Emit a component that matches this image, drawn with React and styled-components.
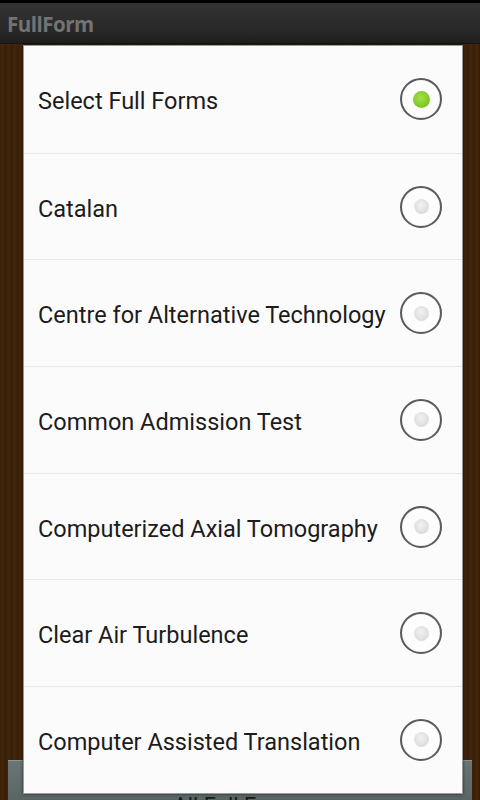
import React, { useState } from "react";
import styled, { createGlobalStyle } from "styled-components";

const GlobalStyle = createGlobalStyle`
  html, body {
    margin: 0;
    padding: 0;
    background: #000;
  }
  * {
    box-sizing: border-box;
  }
`;

const Screen = styled.div`
  position: relative;
  width: 480px;
  height: 800px;
  overflow: hidden;
  display: flex;
  flex-direction: column;
  font-family: Roboto, "Open Sans", sans-serif;
  background: #000;
  padding-top: 3px;
`;

const TitleBar = styled.div`
  height: 41px;
  display: flex;
  align-items: center;
  padding-left: 7px;
  padding-top: 2px;
  background: linear-gradient(#333333, #282828 70%, #1e1e1e);
  border-bottom: 1px solid #151515;
`;

const Title = styled.h1`
  margin: 0;
  font-family: "Open Sans", sans-serif;
  font-size: 20.5px;
  font-weight: bold;
  color: #737373;
  letter-spacing: -0.5px;
`;

const Content = styled.div`
  flex: 1;
  display: flex;
  flex-direction: column;
  justify-content: flex-end;
  padding: 0 8px;
  background: repeating-linear-gradient(
      90deg,
      #3a2108 0px,
      #43270c 3px,
      #341d06 6px
    );
`;

const SearchButton = styled.div`
  height: 64px;
  margin-bottom: -24px;
  background: linear-gradient(#6a7676, #4f5a5a);
  border-top: 1px solid #8a9494;
  display: flex;
  justify-content: center;
  padding-top: 32px;
  font-size: 22px;
  color: #1a1a1a;
`;

const Dialog = styled.div`
  position: absolute;
  left: 23px;
  top: 45px;
  width: 440px;
  height: 749px;
  background: #fbfbfb;
  border: 1px solid #9a9a9a;
  box-shadow: 0 0 3px rgba(0, 0, 0, 0.6);
  display: flex;
  flex-direction: column;
  overflow: hidden;
`;

const Row = styled.label`
  flex: 0 0 106.7px;
  display: flex;
  align-items: center;
  justify-content: space-between;
  padding: 4px 20px 0 14px;
  border-top: ${(p) => (p.$first ? "none" : "1px solid #e8e8e8")};
  cursor: pointer;
`;

const RowText = styled.span`
  font-size: 23.5px;
  color: #1c1c1c;
  white-space: nowrap;
`;

const Radio = styled.span`
  flex: 0 0 auto;
  width: 42px;
  height: 42px;
  margin-top: -4px;
  border-radius: 50%;
  border: 2px solid #5a5a5a;
  background: #fdfdfd;
  display: flex;
  align-items: center;
  justify-content: center;
  box-shadow: inset 0 0 1px rgba(0, 0, 0, 0.2);
`;

const Dot = styled.span`
  width: ${(p) => (p.$on ? "17px" : "15px")};
  height: ${(p) => (p.$on ? "17px" : "15px")};
  border-radius: 50%;
  background: ${(p) =>
    p.$on
      ? "radial-gradient(circle at 45% 40%, #a6e24a, #7cc520 70%, #6bb315)"
      : "radial-gradient(circle at 45% 40%, #f2f2f2, #dcdcdc 70%, #cfcfcf)"};
`;

const items = [
  "Select Full Forms",
  "Catalan",
  "Centre for Alternative Technology",
  "Common Admission Test",
  "Computerized Axial Tomography",
  "Clear Air Turbulence",
  "Computer Assisted Translation",
];

export default function App() {
  const [selected, setSelected] = useState(0);

  return (
    <>
      <GlobalStyle />
      <Screen>
        <TitleBar>
          <Title>FullForm</Title>
        </TitleBar>
        <Content>
          <SearchButton>All Full Forms</SearchButton>
        </Content>
        <Dialog>
          {items.map((item, i) => (
            <Row key={item} $first={i === 0} onClick={() => setSelected(i)}>
              <RowText>{item}</RowText>
              <Radio>
                <Dot $on={selected === i} />
              </Radio>
            </Row>
          ))}
        </Dialog>
      </Screen>
    </>
  );
}
